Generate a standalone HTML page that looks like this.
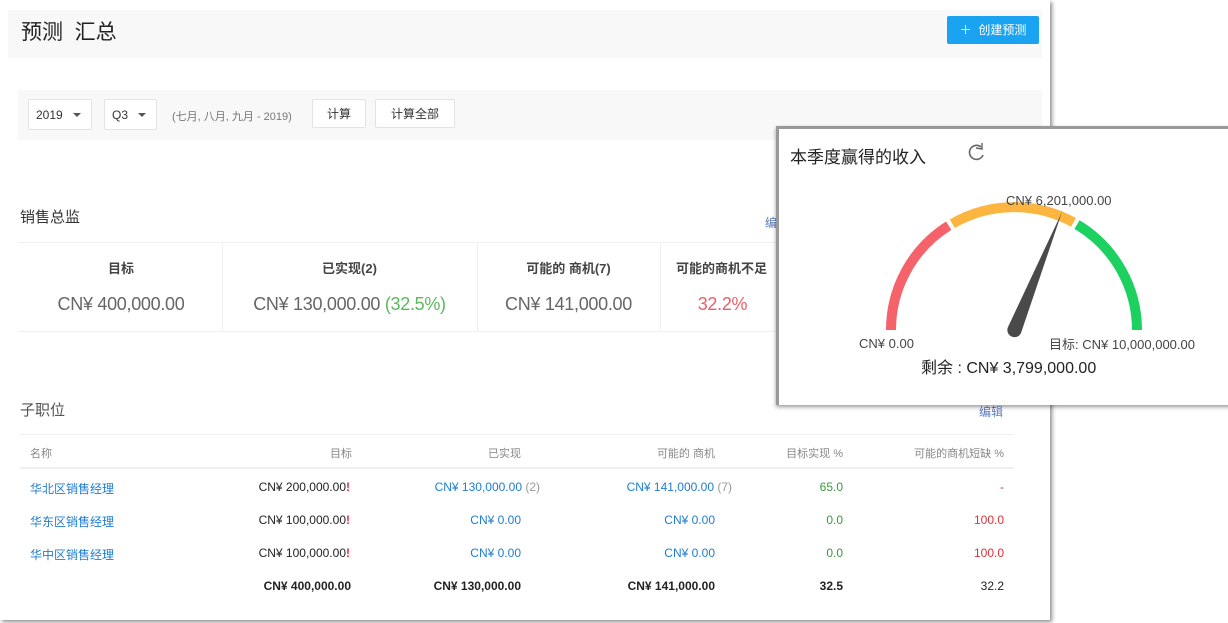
<!DOCTYPE html>
<html><head><meta charset="utf-8"><style>
*{margin:0;padding:0;box-sizing:border-box}
body{width:1228px;height:623px;background:#fff;position:relative;overflow:hidden;font-family:"Liberation Sans","Noto Sans CJK SC",sans-serif;color:#333}
.a{position:absolute;white-space:nowrap}
.main{position:absolute;left:0;top:0;width:1050px;height:620px;background:#fff;box-shadow:2px 2px 4px rgba(0,0,0,.45)}
.btn{position:absolute;border:1px solid #e3e3e3;background:#fff;font-size:12px;color:#333;display:flex;align-items:center;justify-content:center;border-radius:2px}
.tri{display:inline-block;border-left:4px solid transparent;border-right:4px solid transparent;border-top:4px solid #555;margin-left:10px}
.r{text-align:right}
.blue{color:#1f7dd4}
.g{color:#3a9a3a}
.red{color:#e0303a}
.big{font-size:18px;color:#666;letter-spacing:-0.3px}
</style></head><body>
<div class="main">
 <div class="a" style="left:8px;top:10px;width:1034px;height:48px;background:#f8f8f9"></div>
 <div class="a" style="left:21px;top:16px;font-size:21px;color:#222">预测&nbsp;&nbsp;汇总</div>
 <div class="a" style="left:947px;top:16px;width:92px;height:28px;background:#1aa3f0;color:#fff;font-size:12px;line-height:28px;text-align:center;border-radius:2px">＋&nbsp; 创建预测</div>

 <div class="a" style="left:18px;top:90px;width:1024px;height:50px;background:#f8f8f9"></div>
 <div class="btn" style="left:28px;top:99px;width:64px;height:31px;justify-content:flex-start;padding-left:7px">2019<span class="tri"></span></div>
 <div class="btn" style="left:104px;top:99px;width:53px;height:31px;justify-content:flex-start;padding-left:7px">Q3<span class="tri"></span></div>
 <div class="a" style="left:172px;top:108px;font-size:11px;color:#777">(七月, 八月, 九月 - 2019)</div>
 <div class="btn" style="left:312px;top:99px;width:54px;height:29px">计算</div>
 <div class="btn" style="left:375px;top:99px;width:80px;height:29px">计算全部</div>

 <div class="a" style="left:20px;top:206px;font-size:15px;color:#333">销售总监</div>
 <div class="a" style="left:765px;top:214px;font-size:12px;color:#5a7cc0">编</div>
 <div class="a" style="left:18px;top:242px;width:770px;height:90px;border-top:1px solid #f0f0f0;border-bottom:1px solid #f0f0f0"></div>
 <div class="a" style="left:222px;top:242px;width:1px;height:90px;background:#f0f0f0"></div>
 <div class="a" style="left:477px;top:242px;width:1px;height:90px;background:#f0f0f0"></div>
 <div class="a" style="left:660px;top:242px;width:1px;height:90px;background:#f0f0f0"></div>
 <div class="a" style="left:20px;top:258px;width:202px;text-align:center;font-size:13px;font-weight:bold;color:#444">目标</div>
 <div class="a big" style="left:20px;top:294px;width:202px;text-align:center">CN¥ 400,000.00</div>
 <div class="a" style="left:222px;top:258px;width:255px;text-align:center;font-size:13px;font-weight:bold;color:#444">已实现(2)</div>
 <div class="a big" style="left:222px;top:294px;width:255px;text-align:center">CN¥ 130,000.00<span style="color:#5cb85c"> (32.5%)</span></div>
 <div class="a" style="left:477px;top:258px;width:183px;text-align:center;font-size:13px;font-weight:bold;color:#444">可能的 商机(7)</div>
 <div class="a big" style="left:477px;top:294px;width:183px;text-align:center">CN¥ 141,000.00</div>
 <div class="a" style="left:676px;top:258px;font-size:13px;font-weight:bold;color:#444">可能的商机不足</div>
 <div class="a big" style="left:660px;top:294px;width:125px;text-align:center;color:#e8606a">32.2%</div>

 <div class="a" style="left:20px;top:399px;font-size:15px;color:#555">子职位</div>
 <div class="a" style="left:979px;top:403px;font-size:12px;color:#5a7cc0">编辑</div>
 <div class="a" style="left:20px;top:434px;width:994px;height:1px;background:#f0f0f0"></div>
 <div class="a" style="left:20px;top:467px;width:994px;height:2px;background:#eee"></div>
 <div class="a" style="left:30px;top:445px;font-size:11px;color:#888">名称</div>
 <div class="a r" style="left:250px;top:445px;width:102px;font-size:11px;color:#888">目标</div>
 <div class="a r" style="left:420px;top:445px;width:101px;font-size:11px;color:#888">已实现</div>
 <div class="a r" style="left:600px;top:445px;width:115px;font-size:11px;color:#888">可能的 商机</div>
 <div class="a r" style="left:760px;top:445px;width:83px;font-size:11px;color:#888">目标实现 %</div>
 <div class="a r" style="left:880px;top:445px;width:124px;font-size:11px;color:#888">可能的商机短缺 %</div>

 <div class="a blue" style="left:30px;top:480px;font-size:12px">华北区销售经理</div>
 <div class="a r" style="left:200px;top:480px;width:150px;font-size:12px;color:#222">CN¥ 200,000.00<span style="color:#e0303a;font-weight:bold">!</span></div>
 <div class="a r blue" style="left:380px;top:480px;width:160px;font-size:12px">CN¥ 130,000.00 <span style="color:#999">(2)</span></div>
 <div class="a r blue" style="left:580px;top:480px;width:152px;font-size:12px">CN¥ 141,000.00 <span style="color:#999">(7)</span></div>
 <div class="a r g" style="left:760px;top:480px;width:83px;font-size:12px">65.0</div>
 <div class="a r red" style="left:900px;top:480px;width:104px;font-size:12px">-</div>

 <div class="a blue" style="left:30px;top:513px;font-size:12px">华东区销售经理</div>
 <div class="a r" style="left:200px;top:513px;width:150px;font-size:12px;color:#222">CN¥ 100,000.00<span style="color:#e0303a;font-weight:bold">!</span></div>
 <div class="a r blue" style="left:380px;top:513px;width:141px;font-size:12px">CN¥ 0.00</div>
 <div class="a r blue" style="left:580px;top:513px;width:135px;font-size:12px">CN¥ 0.00</div>
 <div class="a r g" style="left:760px;top:513px;width:83px;font-size:12px">0.0</div>
 <div class="a r red" style="left:900px;top:513px;width:104px;font-size:12px">100.0</div>

 <div class="a blue" style="left:30px;top:546px;font-size:12px">华中区销售经理</div>
 <div class="a r" style="left:200px;top:546px;width:150px;font-size:12px;color:#222">CN¥ 100,000.00<span style="color:#e0303a;font-weight:bold">!</span></div>
 <div class="a r blue" style="left:380px;top:546px;width:141px;font-size:12px">CN¥ 0.00</div>
 <div class="a r blue" style="left:580px;top:546px;width:135px;font-size:12px">CN¥ 0.00</div>
 <div class="a r g" style="left:760px;top:546px;width:83px;font-size:12px">0.0</div>
 <div class="a r red" style="left:900px;top:546px;width:104px;font-size:12px">100.0</div>

 <div class="a r" style="left:200px;top:579px;width:151px;font-size:12px;font-weight:bold;color:#222">CN¥ 400,000.00</div>
 <div class="a r" style="left:380px;top:579px;width:141px;font-size:12px;font-weight:bold;color:#222">CN¥ 130,000.00</div>
 <div class="a r" style="left:580px;top:579px;width:135px;font-size:12px;font-weight:bold;color:#222">CN¥ 141,000.00</div>
 <div class="a r" style="left:760px;top:579px;width:83px;font-size:12px;font-weight:bold;color:#222">32.5</div>
 <div class="a r" style="left:900px;top:579px;width:104px;font-size:12px;color:#222">32.2</div>
</div>

<div class="a" style="left:776px;top:126px;width:460px;height:279px;background:#fff;border-top:3px solid #999;border-left:3px solid #999;box-shadow:0 2px 4px rgba(0,0,0,.4)"></div>
<div class="a" style="left:790px;top:143px;font-size:17px;color:#222">本季度赢得的收入</div>
<svg class="a" style="left:0;top:0" width="1228" height="623">
 <path d="M981 147 A7 7 0 1 0 983 155" fill="none" stroke="#666" stroke-width="1.6"/>
 <path d="M982 143 L982 149 L976 148" fill="none" stroke="#666" stroke-width="1.4"/>
 <path d="M891 330 A123 123 0 0 1 948.7 225.7" fill="none" stroke="#f6626a" stroke-width="10"/>
 <path d="M952.3 223.7 A123 123 0 0 1 1073.5 222.4" fill="none" stroke="#fcb640" stroke-width="10"/>
 <path d="M1077 224.6 A123 123 0 0 1 1137 330" fill="none" stroke="#1dd160" stroke-width="10"/>
 <path d="M1008 327 L1062 212 L1021 333 A7 7 0 0 1 1008 327 Z" fill="#4a4a4a"/>
</svg>
<div class="a" style="left:1006px;top:193px;font-size:13px;color:#444">CN¥ 6,201,000.00</div>
<div class="a" style="left:859px;top:336px;font-size:13px;color:#444">CN¥ 0.00</div>
<div class="a" style="left:1049px;top:334px;font-size:13px;color:#444">目标: CN¥ 10,000,000.00</div>
<div class="a" style="left:921px;top:354px;font-size:16px;color:#222">剩余 : CN¥ 3,799,000.00</div>
</body></html>
